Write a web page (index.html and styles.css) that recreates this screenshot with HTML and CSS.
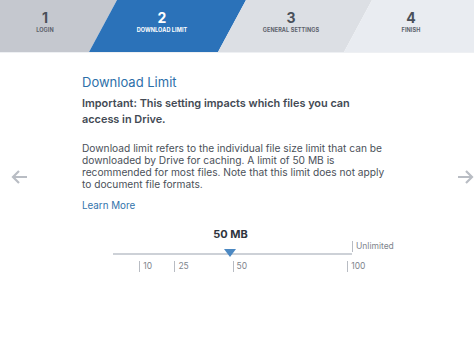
FILE: index.html
```html
<!DOCTYPE html>
<html lang="en">
<head>
    <meta charset="UTF-8">
    <meta name="viewport" content="width=device-width, initial-scale=1.0">
    <title>Setup - Download Limit</title>
    <link rel="stylesheet" href="styles.css">
</head>
<body>

    <!-- Wizard steps -->
    <header class="steps">
        <svg class="steps-bg" width="474" height="52" viewBox="0 0 474 52">
            <polygon points="0,0 117,0 89,52 0,52" fill="#c5c8cf"/>
            <polygon points="117,0 246,0 218,52 89,52" fill="#2b72b9"/>
            <polygon points="246,0 372,0 344,52 218,52" fill="#dcdfe4"/>
            <polygon points="372,0 474,0 474,52 344,52" fill="#e9ecf1"/>
        </svg>
        <div class="step step-1">
            <span class="step-num">1</span>
            <span class="step-name">Login</span>
        </div>
        <div class="step step-2 active">
            <span class="step-num">2</span>
            <span class="step-name">Download Limit</span>
        </div>
        <div class="step step-3">
            <span class="step-num">3</span>
            <span class="step-name">General Settings</span>
        </div>
        <div class="step step-4">
            <span class="step-num">4</span>
            <span class="step-name">Finish</span>
        </div>
    </header>

    <main class="page">
        <button class="nav-arrow" aria-label="Back">
            <svg width="18" height="16" viewBox="0 0 18 16"><path d="M16 8H2M8 2L2 8l6 6" fill="none" stroke="#b9bdc4" stroke-width="2.2"/></svg>
        </button>

        <section class="content">
            <h1 class="title">Download Limit</h1>
            <p class="important">Important: This setting impacts which files you can access in Drive.</p>
            <p class="desc">Download limit refers to the individual file size limit that can be downloaded by Drive for caching. A limit of 50 MB is recommended for most files. Note that this limit does not apply to document file formats.</p>
            <a class="learn-more" href="#">Learn More</a>

            <div class="slider">
                <div class="slider-value">50 MB</div>
                <div class="slider-track">
                    <span class="unlimited">Unlimited</span>
                    <span class="thumb" style="left: 49%"></span>
                </div>
                <div class="ticks">
                    <span class="tick" style="left: 11%">10</span>
                    <span class="tick" style="left: 25.7%">25</span>
                    <span class="tick" style="left: 50%">50</span>
                    <span class="tick" style="left: 98%">100</span>
                </div>
            </div>
        </section>

        <button class="nav-arrow" aria-label="Next">
            <svg width="18" height="16" viewBox="0 0 18 16"><path d="M2 8h14M10 2l6 6-6 6" fill="none" stroke="#b9bdc4" stroke-width="2.2"/></svg>
        </button>
    </main>

</body>
</html>
```

FILE: styles.css
```css
/* Base */
body {
    margin: 0;
    background: #fff;
    font-family: Inter, "Noto Sans", sans-serif;
    color: #3c434d;
}

/* Step header */
.steps {
    position: relative;
    display: flex;
    height: 52px;
    border-bottom: 1px solid #eef0f3;
}

.steps-bg {
    position: absolute;
    top: 0;
    left: 0;
}

.step {
    position: relative;
    display: flex;
    flex-direction: column;
    align-items: center;
    padding-top: 10px;
    color: #4a505a;
}

.step-1 { width: 90px; }
.step-2 { width: 144px; }
.step-3 { width: 114px; }
.step-4 { width: 126px; }

.step.active {
    color: #fff;
}

.step-num {
    font-size: 14px;
    font-weight: 700;
    line-height: 16px;
}

.step-name {
    margin-top: 1px;
    font-size: 5.5px;
    font-weight: 700;
    text-transform: uppercase;
    letter-spacing: 0.1px;
}

.step-3 .step-name,
.step-4 .step-name,
.step-1 .step-name {
    color: #5c626c;
}

/* Main area */
.page {
    display: flex;
    align-items: flex-start;
}

.nav-arrow {
    border: none;
    background: none;
    padding: 0;
    margin-top: 116px;
    width: 18px;
    height: 16px;
}

.nav-arrow:first-child {
    margin-left: 11px;
}

.content {
    flex: 1;
    padding: 21px 0 0 53px;
}

.title {
    margin: 0;
    font-size: 13px;
    font-weight: 400;
    color: #2d6fa9;
    line-height: 16px;
}

.important {
    margin: 5px 0 0;
    width: 290px;
    font-size: 10.9px;
    font-weight: 600;
    line-height: 16px;
    color: #434a54;
}

.desc {
    margin: 15px 0 0;
    width: 306px;
    font-size: 10.2px;
    line-height: 12px;
    color: #4a5059;
}

.learn-more {
    display: inline-block;
    margin-top: 10px;
    font-size: 9.8px;
    color: #3273ab;
    text-decoration: none;
}

/* Slider */
.slider {
    margin: 14px 0 0 31px;
    width: 239px;
}

.slider-value {
    text-align: center;
    font-size: 11px;
    font-weight: 700;
    color: #2f353e;
    line-height: 14px;
    margin-left: -4px;
}

.slider-track {
    position: relative;
    margin-top: 12px;
    height: 2px;
    background: #cdd1d7;
}

.unlimited {
    position: absolute;
    left: 100%;
    bottom: 3px;
    padding-left: 3px;
    border-left: 1px solid #b8bcc3;
    font-size: 8.5px;
    line-height: 11px;
    color: #80858d;
    white-space: nowrap;
}

.thumb {
    position: absolute;
    top: -4px;
    width: 0;
    height: 0;
    border-left: 6px solid transparent;
    border-right: 6px solid transparent;
    border-top: 8px solid #4b88c2;
    margin-left: -6px;
}

.ticks {
    position: relative;
    height: 14px;
    margin-top: 6px;
}

.tick {
    position: absolute;
    top: 0;
    padding-left: 3px;
    border-left: 1px solid #b8bcc3;
    font-size: 8.5px;
    line-height: 11px;
    color: #80858d;
}
```
